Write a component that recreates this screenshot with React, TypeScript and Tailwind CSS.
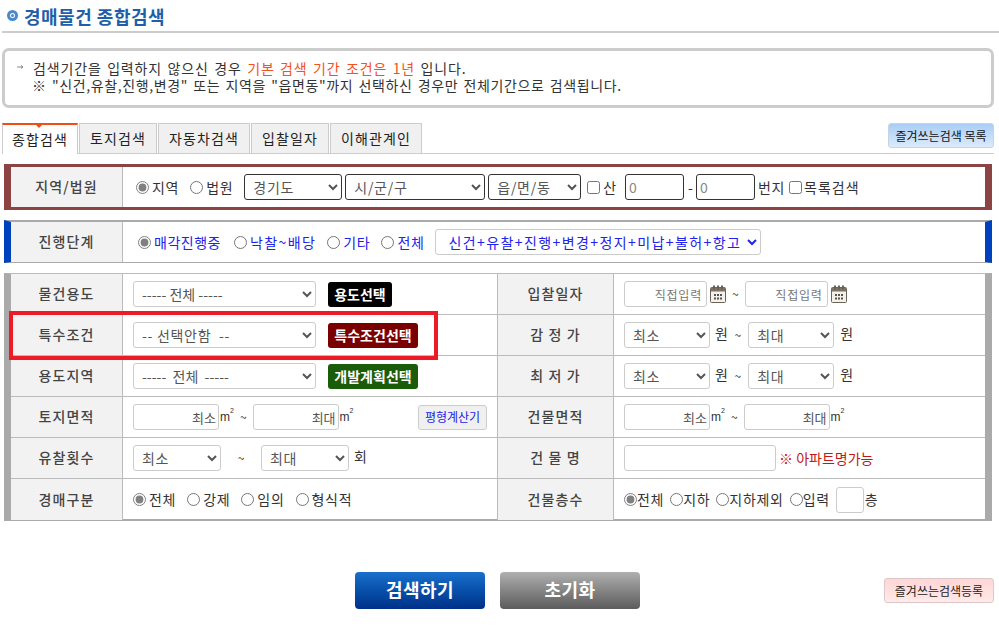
import React from "react";

const fieldCls = "h-[26px] rounded-[3px] border border-[#ccc] bg-white text-[#555]";
const selectCls = `${fieldCls} pl-[4px]`;
const inputCls = `${fieldCls} px-[2px] text-right text-[13px] tracking-normal placeholder:text-[#555]`;
const dateCls = "h-[26px] w-[83px] rounded-[3px] border border-[#ccc] bg-white px-[4px] text-right text-[12px] tracking-[0.8px] placeholder:text-[#777]";
const darkSelect = "h-[26px] rounded-[3px] border border-[#333] pl-[4px] text-[#555] bg-white";

const Label = ({ children, w = "w-[112px]" }: { children: React.ReactNode; w?: string }) => (
  <div className={`${w} shrink-0 self-stretch flex items-center justify-center pb-[1px] bg-[#f2f2f2] border-r border-[#bbb] text-[14px] tracking-[1.1px] font-medium text-[#444]`}>
    {children}
  </div>
);

const Radio = ({ name, checked, className = "" }: { name: string; checked?: boolean; className?: string }) => (
  <input type="radio" name={name} defaultChecked={checked} className={`m-0 h-[13px] w-[13px] shrink-0 accent-[#808080] ${className}`} />
);

const Calendar = () => (
  <svg width="16" height="18" viewBox="0 0 16 18" className="shrink-0">
    <rect x="0.5" y="2.5" width="15" height="15" rx="1" fill="#f4f0ea" stroke="#6b6257" />
    <rect x="1" y="3" width="14" height="3.5" fill="#7d7366" />
    <rect x="3" y="0.5" width="2" height="4" fill="#6b6257" />
    <rect x="7" y="0.5" width="2" height="4" fill="#6b6257" />
    <rect x="11" y="0.5" width="2" height="4" fill="#6b6257" />
    <path d="M4 9h2v2H4zM7 9h2v2H7zM10 9h2v2h-2zM4 12.500h2v2H4zM7 12.500h2v2H7zM10 12.500h2v2h-2z" fill="#555" />
  </svg>
);

const Sq = () => (
  <span className="ml-[1px] text-[12px] tracking-normal text-[#333] font-['Liberation_Sans',sans-serif] leading-none">
    m<sup className="text-[7px] align-super">2</sup>
  </span>
);

// one table row, two cells side by side
const Row = ({ left, right, leftLabel, rightLabel, last }: { left: React.ReactNode; right: React.ReactNode; leftLabel: string; rightLabel: string; last?: boolean }) => (
  <div className={`flex h-[41px] ${last ? "" : "border-b border-[#bbb]"}`}>
    <Label>{leftLabel}</Label>
    <div className="w-[375px] shrink-0 flex items-center pl-[10px] border-r border-[#bbb] text-[#333]">{left}</div>
    <Label w="w-[116px]">{rightLabel}</Label>
    <div className="flex-1 flex items-center pl-[10px] text-[#333] whitespace-nowrap">{right}</div>
  </div>
);

const Tag = ({ children, bg, w }: { children: React.ReactNode; bg: string; w: string }) => (
  <span className={`ml-[12px] ${bg} ${w} h-[25px] rounded-[3px] flex items-center justify-center text-[14px] tracking-normal font-bold text-white`}>{children}</span>
);

const PriceRange = () => (
  <>
    <select className={`${selectCls} w-[86px]`}><option>최소</option></select>
    <span className="ml-[5px] mb-[3px]">원</span>
    <span className="ml-[6px] mr-[7px] text-[12px] tracking-normal">~</span>
    <select className={`${selectCls} w-[86px]`}><option>최대</option></select>
    <span className="ml-[6px] mb-[3px]">원</span>
  </>
);

export default function App() {
  return (
    <div className="relative w-[999px] h-[633px] overflow-hidden bg-white font-['Noto_Sans_CJK_KR','Liberation_Sans',sans-serif] text-[14px] tracking-[0.7px] text-[#333]">
      {/* 제목 */}
      <div className="ml-[2px] h-[33px] border-b-2 border-[#ccc] flex items-center pl-[5px]">
        <span className="w-[11px] h-[11px] rounded-full border-[3px] border-[#4a8ac8] bg-[#fff] flex items-center justify-center">
          <span className="w-[3px] h-[3px] rounded-full bg-[#4a8ac8]" />
        </span>
        <h1 className="ml-[6px] text-[18px] tracking-[0.5px] font-bold text-[#1f5ea8] leading-none">경매물건 종합검색</h1>
      </div>

      {/* 안내문 */}
      <div className="mt-[15px] ml-[2px] w-[992px] h-[60px] border-[3px] border-[#ccc] rounded-[7px] flex pl-[12px] pt-[9px] leading-[17px] tracking-[0.62px] [word-spacing:1.5px] text-[#333]">
        <svg width="16" height="8" viewBox="0 0 16 8" className="shrink-0 mt-[3px]">
          <path d="M0 4h6M4 2.500l2 1.500-2 1.500" fill="none" stroke="#888" />
        </svg>
        <div>
          <p className="tracking-[0.85px]">검색기간을 입력하지 않으신 경우 <span className="text-[#f4511e]">기본 검색 기간 조건은 1년</span> 입니다.</p>
          <p className="-ml-[1px]">※ "신건,유찰,진행,변경" 또는 지역을 "읍면동"까지 선택하신 경우만 전체기간으로 검색됩니다.</p>
        </div>
      </div>

      {/* 탭 */}
      <div className="mt-[15px] ml-[2px] w-[992px] h-[31px] border-b border-[#ccc] flex items-start gap-[1px] relative tracking-[1.1px]">
        <div className="relative w-[76px] h-[31px] bg-white border-t-2 border-x border-t-[#f04e12] border-x-[#ccc] flex items-center justify-center text-[#222]">
          종합검색
          <span className="absolute top-0 left-[33px] w-0 h-0 border-x-[3px] border-x-transparent border-t-[3px] border-t-[#f04e12]" />
        </div>
        {[
          ["토지검색", "w-[78px]"],
          ["자동차검색", "w-[92px]"],
          ["입찰일자", "w-[78px]"],
          ["이해관계인", "w-[92px]"],
        ].map(([t, w]) => (
          <div key={t} className={`${w} h-[30px] bg-[#f0f0f0] border border-b-0 border-[#ccc] flex items-center justify-center text-[#222]`}>
            {t}
          </div>
        ))}
        <button className="ml-auto w-[106px] h-[25px] rounded-[3px] border border-[#c4d4e4] bg-gradient-to-b from-[#a9cdf5] to-[#dcebfb] text-[12px] tracking-normal text-[#111]">
          즐겨쓰는검색 목록
        </button>
      </div>

      {/* 지역/법원 */}
      <div className="mt-[10px] ml-[4px] w-[988px] h-[46px] border-y-[3px] border-x-[7px] border-[#8b4343] flex items-center text-[#333]">
        <Label>지역/법원</Label>
        <div className="flex items-center pl-[13px] whitespace-nowrap">
          <Radio name="loc" checked />
          <span className="ml-[3px]">지역</span>
          <Radio name="loc" className="ml-[11px]" />
          <span className="ml-[3px]">법원</span>
          <select className={`ml-[11px] w-[98px] ${darkSelect}`}><option>경기도</option></select>
          <select className={`ml-[3px] w-[140px] ${darkSelect}`}><option>시/군/구</option></select>
          <select className={`ml-[3px] w-[93px] ${darkSelect}`}><option>읍/면/동</option></select>
          <input type="checkbox" className="ml-[6px] m-0 h-[13px] w-[13px] shrink-0" />
          <span className="ml-[3px]">산</span>
          <input defaultValue="0" className="ml-[8px] h-[26px] w-[59px] rounded-[3px] border border-[#333] px-[3px] text-[#888] bg-white" />
          <span className="mx-[4px] w-[4px]">-</span>
          <input defaultValue="0" className="h-[26px] w-[59px] rounded-[3px] border border-[#333] px-[3px] text-[#888] bg-white" />
          <span className="ml-[3px]">번지</span>
          <input type="checkbox" className="ml-[4px] m-0 h-[13px] w-[13px] shrink-0" />
          <span className="ml-[2px] tracking-[1px]">목록검색</span>
        </div>
      </div>

      {/* 진행단계 */}
      <div className="mt-[10px] ml-[4px] w-[988px] h-[43px] border-x-[7px] border-x-[#0041bd] border-t-2 border-t-[#aaa] border-b border-b-[#aaa] flex items-center text-[#2222ee]">
        <Label>진행단계</Label>
        <div className="flex items-center pl-[15px] whitespace-nowrap">
          <Radio name="stage" checked />
          <span className="ml-[3px] tracking-[0.5px]">매각진행중</span>
          <Radio name="stage" className="ml-[13px]" />
          <span className="ml-[3px] tracking-[1.4px]">낙찰~배당</span>
          <Radio name="stage" className="ml-[11px]" />
          <span className="ml-[3px]">기타</span>
          <Radio name="stage" className="ml-[11px]" />
          <span className="ml-[3px]">전체</span>
          <select className="ml-[10px] h-[26px] w-[326px] rounded-[3px] border border-[#ccc] pl-[9px] tracking-[1.4px] text-[#2222ee] bg-white">
            <option>신건+유찰+진행+변경+정지+미납+불허+항고</option>
          </select>
        </div>
      </div>

      {/* 상세 조건 */}
      <div className="mt-[10px] ml-[4px] w-[988px] h-[248px] border-x-[7px] border-x-[#aaa] border-t border-t-[#bbb] border-b-2 border-b-[#aaa]">
        <Row
          leftLabel="물건용도"
          left={<><select className={`${selectCls} w-[183px] tracking-normal`}><option>----- 전체 -----</option></select><Tag bg="bg-black" w="w-[64px]">용도선택</Tag></>}
          rightLabel="입찰일자"
          right={<>
            <input placeholder="직접입력" className={dateCls} />
            <span className="ml-[3px]"><Calendar /></span>
            <span className="mx-[6px] text-[12px] tracking-normal">~</span>
            <input placeholder="직접입력" className={dateCls} />
            <span className="ml-[3px]"><Calendar /></span>
          </>}
        />
        <Row
          leftLabel="특수조건"
          left={<><select className={`${selectCls} w-[183px]`}><option>-- 선택안함&nbsp; --</option></select><Tag bg="bg-[#7a0000]" w="w-[90px]">특수조건선택</Tag></>}
          rightLabel="감 정 가"
          right={<PriceRange />}
        />
        <Row
          leftLabel="용도지역"
          left={<><select className={`${selectCls} w-[183px] tracking-normal`}><option>-----&nbsp; 전체&nbsp; -----</option></select><Tag bg="bg-[#1a5c0a]" w="w-[90px]">개발계획선택</Tag></>}
          rightLabel="최 저 가"
          right={<PriceRange />}
        />
        <Row
          leftLabel="토지면적"
          left={<>
            <input placeholder="최소" className={`${inputCls} w-[86px]`} />
            <Sq />
            <span className="mx-[6px] text-[12px] tracking-normal">~</span>
            <input placeholder="최대" className={`${inputCls} w-[86px]`} />
            <Sq />
            <button className="ml-auto mr-[10px] w-[69px] h-[25px] rounded-[3px] border border-[#ccc] bg-[#f0f0f0] text-[12px] tracking-normal text-[#2222ee]">평형계산기</button>
          </>}
          rightLabel="건물면적"
          right={<>
            <input placeholder="최소" className={`${inputCls} w-[86px]`} />
            <Sq />
            <span className="mx-[6px] text-[12px] tracking-normal">~</span>
            <input placeholder="최대" className={`${inputCls} w-[86px]`} />
            <Sq />
          </>}
        />
        <Row
          leftLabel="유찰횟수"
          left={<>
            <select className={`${selectCls} w-[88px]`}><option>최소</option></select>
            <span className="w-[40px] text-center text-[12px] tracking-normal">~</span>
            <select className={`${selectCls} w-[88px]`}><option>최대</option></select>
            <span className="ml-[5px] mb-[3px]">회</span>
          </>}
          rightLabel="건 물 명"
          right={<>
            <input className={`${inputCls} w-[152px]`} />
            <span className="ml-[3px] text-[#c01818] tracking-normal">※ 아파트명가능</span>
          </>}
        />
        <Row
          last
          leftLabel="경매구분"
          left={<>
            <Radio name="kind" checked />
            <span className="ml-[3px]">전체</span>
            <Radio name="kind" className="ml-[11px]" />
            <span className="ml-[3px]">강제</span>
            <Radio name="kind" className="ml-[11px]" />
            <span className="ml-[3px]">임의</span>
            <Radio name="kind" className="ml-[11px]" />
            <span className="ml-[3px]">형식적</span>
          </>}
          rightLabel="건물층수"
          right={<>
            <Radio name="floor" checked />
            <span>전체</span>
            <Radio name="floor" className="ml-[6px]" />
            <span>지하</span>
            <Radio name="floor" className="ml-[6px]" />
            <span>지하제외</span>
            <Radio name="floor" className="ml-[6px]" />
            <span>입력</span>
            <input className={`${inputCls} ml-[6px] w-[28px]`} />
            <span className="ml-[1px]">층</span>
          </>}
        />
      </div>

      {/* 강조 표시 */}
      <div className="absolute left-[9px] top-[311px] w-[429px] h-[49px] border-[4px] border-[#ed1c24] pointer-events-none" />

      {/* 하단 버튼 */}
      <div className="mt-[51px] ml-[355px] w-[639px] flex items-center">
        <button className="w-[130px] h-[37px] rounded-[4px] bg-gradient-to-b from-[#1a70cc] to-[#003088] pb-[2px] text-[18px] tracking-[0.5px] font-bold text-white">검색하기</button>
        <button className="ml-[15px] w-[140px] h-[37px] rounded-[4px] bg-gradient-to-b from-[#b0b0b0] to-[#5c5c5c] pb-[2px] text-[18px] tracking-[0.5px] font-bold text-white">초기화</button>
        <button className="ml-auto w-[110px] h-[25px] rounded-[3px] border border-[#e0c8c8] bg-gradient-to-b from-[#ffd6d6] to-[#ffeaea] text-[12px] tracking-normal text-[#222]">즐겨쓰는검색등록</button>
      </div>
    </div>
  );
}
